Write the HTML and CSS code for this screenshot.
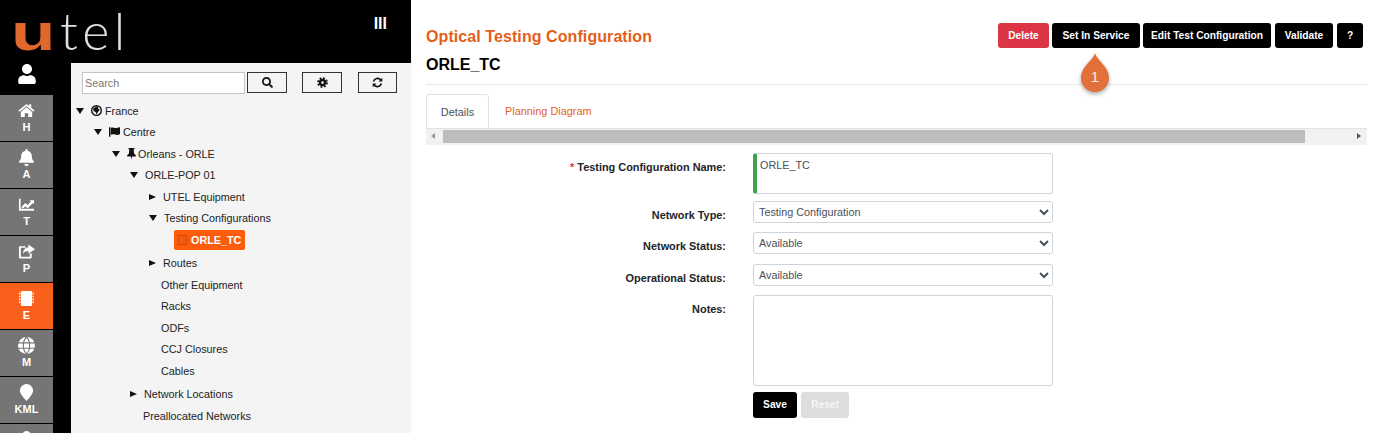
FILE: index.html
```html
<!DOCTYPE html>
<html lang="en">
<head>
<meta charset="utf-8">
<title>Optical Testing Configuration</title>
<link rel="stylesheet" href="styles.css">
</head>
<body>
<div class="app">
  <aside class="left">
    <header class="brand">
      <div class="logo"><span class="logo-u">u</span><span class="logo-tel">tel</span></div>
      <div class="collapse">III</div>
    </header>
    <div class="left-body">
      <nav class="rail">
        <div class="user"><svg class="user-icon" viewBox="0 0 448 512"><path d="M224 256c70.7 0 128-57.3 128-128S294.7 0 224 0 96 57.3 96 128s57.3 128 128 128zm89.6 32h-16.7c-22.2 10.2-46.9 16-72.9 16s-50.6-5.8-72.9-16h-16.7C60.2 288 0 348.2 0 422.4V464c0 26.5 21.5 48 48 48h352c26.5 0 48-21.5 48-48v-41.6c0-74.2-60.2-134.4-134.4-134.4z"/></svg></div>
        <a class="rail-item"><svg class="rail-icon" viewBox="0 0 18 16"><path d="M9 1 0.5 8l1.2 1.4L9 3.4l7.3 6 1.2-1.4L14 5.100V1.500h-2.200v1.800z"/><path d="M9 4.600 3 9.500V15h4.200v-4h3.600v4H15V9.500z"/></svg><span>H</span></a>
        <a class="rail-item"><svg class="rail-icon" viewBox="0 0 448 512"><path d="M224 512c35.32 0 63.97-28.65 63.97-64H160.03c0 35.35 28.65 64 63.97 64zm215.39-149.71c-19.32-20.76-55.47-51.99-55.47-154.29 0-77.7-54.48-139.9-127.94-155.16V32c0-17.67-14.32-32-31.98-32s-31.98 14.33-31.98 32v20.84C118.56 68.1 64.08 130.3 64.08 208c0 102.3-36.15 133.53-55.47 154.29-6 6.45-8.66 14.16-8.61 21.71.11 16.4 12.98 32 32.1 32h383.8c19.12 0 32-15.6 32.1-32 .05-7.55-2.61-15.27-8.61-21.71z"/></svg><span>A</span></a>
        <a class="rail-item"><svg class="rail-icon" viewBox="0 0 18 16"><path d="M1 2h1.800v10.500H17V14.500H1z"/><path d="M4 10.500 7.500 6.500l2.800 2 3.300-3.700-1.500-1.300H17v4.300l-1.300-1.300-5.200 5.500-2.800-2L5.500 12H4z"/></svg><span>T</span></a>
        <a class="rail-item"><svg class="rail-icon" viewBox="0 0 18 16"><path d="M11 0.500 18 5.500 11 10.500V7.500C8 7.500 6 8.500 5.500 11 5 7 7.500 3.800 11 3.500z"/><path d="M1.500 2.500H8V4H3V13.500H12.500V10H14.500V14A1.500 1.500 0 0 1 13 15.500H2.500A1.500 1.500 0 0 1 1 14V3z"/></svg><span>P</span></a>
        <a class="rail-item rail-active"><svg class="rail-icon" viewBox="0 0 16 18"><path d="M3.500 1h9a1.500 1.500 0 0 1 1.500 1.500v13a1.500 1.500 0 0 1-1.500 1.500h-9A1.500 1.500 0 0 1 2 15.500v-13A1.500 1.500 0 0 1 3.500 1z"/><path d="M0 3h1.500v1.500H0zM0 6h1.500v1.500H0zM0 9h1.500v1.500H0zM0 12h1.500v1.500H0zM14.500 3H16v1.500h-1.500zM14.500 6H16v1.500h-1.500zM14.500 9H16v1.500h-1.500zM14.500 12H16v1.500h-1.500z"/></svg><span>E</span></a>
        <a class="rail-item"><svg class="rail-icon" viewBox="0 0 16 16"><circle cx="8" cy="8" r="8"/><path class="rail-cut" d="M0 5.500h16M0 10.500h16M8 0C4 4 4 12 8 16M8 0c4 4 4 12 0 16"/></svg><span>M</span></a>
        <a class="rail-item"><svg class="rail-icon" viewBox="0 0 14 18"><path d="M7 0a7 7 0 0 1 7 7c0 3.500-4 8-7 11C4 15 0 10.500 0 7a7 7 0 0 1 7-7z"/></svg><span>KML</span></a>
        <a class="rail-item"><svg class="rail-icon" viewBox="0 0 448 512"><path d="M224 256c70.7 0 128-57.3 128-128S294.700 0 224 0 96 57.300 96 128s57.300 128 128 128z"/></svg></a>
      </nav>
      <section class="panel">
        <div class="toolbar">
          <input class="search" type="text" placeholder="Search">
          <button class="tool tool-search"><svg class="tool-icon" viewBox="0 0 512 512"><path d="M505 442.7L405.3 343c-4.500-4.500-10.600-7-17-7H372c27.600-35.300 44-79.700 44-128C416 93.100 322.900 0 208 0S0 93.100 0 208s93.100 208 208 208c48.300 0 92.700-16.400 128-44v16.300c0 6.400 2.500 12.500 7 17l99.700 99.700c9.400 9.400 24.600 9.400 33.900 0l28.300-28.300c9.400-9.400 9.400-24.600.1-34zM208 336c-70.700 0-128-57.200-128-128 0-70.700 57.200-128 128-128 70.700 0 128 57.200 128 128 0 70.700-57.200 128-128 128z"/></svg></button>
          <button class="tool tool-gear"><svg class="tool-icon" viewBox="0 0 16 16"><circle class="gear-teeth" cx="8" cy="8" r="6.300"/><circle class="gear-ring" cx="8" cy="8" r="3.700"/></svg></button>
          <button class="tool tool-sync"><svg class="tool-icon" viewBox="0 0 16 16"><path class="sync-arc" d="M2.300 6.500A6 6 0 0 1 12.700 4.200M13.700 9.500A6 6 0 0 1 3.300 11.800"/><path d="M15 1v5.500H9.500zM1 15V9.500h5.500z"/></svg></button>
        </div>
        <ul class="tree">
          <li class="row"><i class="caret-down"></i><svg class="node-icon" viewBox="0 0 16 16"><circle cx="8" cy="8" r="7" class="globe-o"/><path d="M8 2 3 5l1 4 3 1 1 4 2-4 3-3-2-1-1-3z"/></svg><span class="label">France</span></li>
          <li class="lvl1 row"><i class="caret-down"></i><svg class="node-icon flag-icon" viewBox="0 0 16 14"><path d="M0 0h2v14H0z"/><path d="M2.500 1c3-1.500 5.500 1 8.500 0 2-.5 4-1 5-1v10c-2 1.500-5 1.500-7 .7-2-.7-4.500-.7-6.500.3z"/></svg><span class="label">Centre</span></li>
          <li class="lvl2 row"><i class="caret-down"></i><svg class="pin-icon" viewBox="0 0 10 14"><path d="M1.500 0h7v1.500H7.500l.5 5 2 2V10H5.600L5 14 4.400 10H0V8.500l2-2 .5-5h-1z"/></svg><span class="label pin-label">Orleans - ORLE</span></li>
          <li class="lvl3 row"><i class="caret-down"></i><span class="label text-only">ORLE-POP 01</span></li>
          <li class="lvl4 row"><i class="caret-right"></i><span class="label">UTEL Equipment</span></li>
          <li class="lvl4 row"><i class="caret-down"></i><span class="label">Testing Configurations</span></li>
          <li class="lvl-node row"><span class="selected"><i class="square"></i>ORLE_TC</span></li>
          <li class="lvl4 row after-node"><i class="caret-right"></i><span class="label">Routes</span></li>
          <li class="lvl4 row leaf">Other Equipment</li>
          <li class="lvl4 row leaf">Racks</li>
          <li class="lvl4 row leaf">ODFs</li>
          <li class="lvl4 row leaf">CCJ Closures</li>
          <li class="lvl4 row leaf">Cables</li>
          <li class="lvl3 row after-cables"><i class="caret-right"></i><span class="label text-only">Network Locations</span></li>
          <li class="lvl3 row leaf">Preallocated Networks</li>
        </ul>
      </section>
    </div>
  </aside>
  <main class="main">
    <header class="page-head">
      <div class="titles">
        <h1>Optical Testing Configuration</h1>
        <h2>ORLE_TC</h2>
      </div>
      <div class="actions">
        <button class="btn btn-red">Delete</button>
        <button class="btn btn-set">Set In Service</button>
        <button class="btn btn-edit">Edit Test Configuration</button>
        <button class="btn btn-validate">Validate</button>
        <button class="btn btn-help">?</button>
      </div>
      <div class="marker">
        <svg class="marker-drop" viewBox="0 0 30 44"><path d="M15 0C17 8 29 13 29 25A14 14 0 0 1 1 25C1 13 13 8 15 0Z"/></svg>
        <span class="marker-num">1</span>
      </div>
    </header>
    <div class="tabs">
      <a class="tab tab-active">Details</a>
      <a class="tab tab-link">Planning Diagram</a>
    </div>
    <div class="hscroll">
      <i class="arrow-left"></i>
      <div class="track"><div class="thumb"></div></div>
      <i class="arrow-right"></i>
    </div>
    <form class="form">
      <label class="field-label label-name"><span class="req">*</span> Testing Configuration Name:</label>
      <div class="name-box">ORLE_TC</div>
      <label class="field-label label-sel">Network Type:</label>
      <select class="select"><option>Testing Configuration</option></select>
      <label class="field-label label-sel">Network Status:</label>
      <select class="select"><option>Available</option></select>
      <label class="field-label label-sel">Operational Status:</label>
      <select class="select"><option>Available</option></select>
      <label class="field-label label-notes">Notes:</label>
      <textarea class="notes"></textarea>
      <div class="form-actions">
        <button type="button" class="btn btn-save">Save</button>
        <button type="button" class="btn btn-reset">Reset</button>
      </div>
    </form>
  </main>
</div>
</body>
</html>
```

FILE: styles.css
```css
* { box-sizing: border-box; }
html, body { margin: 0; height: 433px; overflow: hidden; background: #fff; }
body { font-family: "Liberation Sans", Arial, sans-serif; font-size: 11px; color: #212529; }
ul { list-style: none; margin: 0; padding: 0; }

.app { display: flex; height: 433px; overflow: hidden; }

/* left column */
.left { width: 411px; flex: none; background: #000; display: flex; flex-direction: column; height: 433px; overflow: hidden; }
.brand { height: 63px; flex: none; display: flex; justify-content: space-between; padding: 0 24px 0 11px; }
.logo { height: 63px; white-space: nowrap; display: flex; align-items: baseline; }
.logo-u { font-family: "Liberation Sans", sans-serif; font-weight: 700; font-size: 52px; line-height: 60px; color: #e0682c; display: inline-block; width: 49px; transform: scaleX(1.4); transform-origin: 0 100%; }
.logo-tel { font-family: "Lato", sans-serif; font-weight: 300; font-size: 52px; line-height: 60px; color: #e0e0e0; letter-spacing: 4.500px; }
.collapse { color: #fff; font-size: 16px; font-weight: 700; padding-top: 15px; }

.left-body { flex: 1; display: flex; min-height: 0; }
.rail { width: 53px; flex: none; margin-right: 18px; display: flex; flex-direction: column; }
.user { height: 32px; flex: none; display: flex; justify-content: center; padding-top: 1px; }
.user-icon { width: 18px; height: 20px; fill: #fff; }
.rail-item { height: 46px; flex: none; margin-bottom: 1px; background: #757575; color: #fff; font-weight: 700; font-size: 11px; display: flex; flex-direction: column; align-items: center; padding-top: 7px; gap: 2px; }
.rail-item span { line-height: 13px; }
.rail-active { background: #f9601c; }
.rail-icon { width: 17px; height: 17px; fill: #fff; }
.rail-cut { fill: none; stroke: #757575; stroke-width: 1; }

.panel { width: 340px; flex: none; background: #f4f4f4; padding: 9px 11px 0; overflow: hidden; }
.toolbar { display: flex; align-items: flex-start; height: 22px; }
.search { width: 163px; height: 22px; border: 1px solid #c4c4c4; background: #fff; padding: 0 2px; font: 10.800px "Liberation Sans", sans-serif; color: #333; }
.search::placeholder { color: #777; opacity: 1; }
.tool { height: 21px; border: 1px solid #333; background: #f4f4f4; padding: 0; display: flex; align-items: center; justify-content: center; }
.tool-search { width: 40px; margin-left: 2px; }
.tool-gear { width: 40px; margin-left: 15px; }
.tool-sync { width: 39px; margin-left: 16px; }
.tool-icon { width: 11px; height: 11px; fill: #111; }
.gear-teeth { fill: none; stroke: #111; stroke-width: 3; stroke-dasharray: 2.6 2.350; }
.gear-ring { fill: none; stroke: #111; stroke-width: 3.400; }
.sync-arc { fill: none; stroke: #111; stroke-width: 2.400; }

.tree { margin: 3px 0 0 -6px; padding-top: 3px; color: #222; font-size: 10.800px; }
.row { height: 21.5px; display: flex; align-items: center; white-space: nowrap; }
.lvl1 { padding-left: 18px; }
.lvl2 { padding-left: 36px; }
.lvl3 { padding-left: 54px; }
.lvl4 { padding-left: 73px; }
.lvl-node { padding-left: 98px; }
.leaf { padding-left: 85px; }
.lvl3.leaf { padding-left: 67px; }
.after-node { margin-top: 2.200px; }
.after-cables { margin-top: 2px; }
.caret-down { width: 0; height: 0; flex: none; border-left: 4px solid transparent; border-right: 4px solid transparent; border-top: 6px solid #111; margin-right: 7px; }
.caret-right { width: 0; height: 0; flex: none; border-top: 3.500px solid transparent; border-bottom: 3.500px solid transparent; border-left: 7px solid #111; margin-right: 7px; }
.node-icon { width: 11px; height: 11px; flex: none; fill: #111; margin-right: 3px; }
.flag-icon { width: 11px; height: 10px; }
.globe-o { fill: #f4f4f4; stroke: #111; stroke-width: 2; }
.pin-icon { width: 9px; height: 12px; flex: none; fill: #111; margin-right: 2px; }
.selected { display: inline-flex; align-items: center; height: 20px; padding: 0 4px; background: #fb5d0d; color: #fff; font-weight: 700; font-size: 10.800px; border-radius: 2px; }
.square { width: 9px; height: 10px; border: 1px solid #d9480a; background: #f55a14; margin-right: 4px; }

/* main */
.main { flex: 1; min-width: 0; padding: 0 6px 0 15px; background: #fff; }
.page-head { position: relative; height: 85px; border-bottom: 1px solid #e7e7e7; display: flex; justify-content: space-between; padding-right: 4px; }
.titles { padding-top: 28px; }
h1 { margin: 0; font-size: 16px; line-height: 18px; font-weight: 700; color: #e35f1a; letter-spacing: .08px; }
h2 { margin: 10px 0 0; font-size: 16px; line-height: 18px; font-weight: 700; color: #000; }
.actions { display: flex; gap: 3px; padding-top: 23px; }
.btn { height: 25px; border: 0; border-radius: 3px; background: #000; color: #fff; font: 700 10.200px "Liberation Sans", sans-serif; padding: 0; }
.btn-red { background: #dc3545; width: 51px; }
.btn-set { width: 88px; }
.btn-edit { width: 128px; }
.btn-validate { width: 58px; margin-left: 1px; }
.btn-help { width: 26px; margin-left: 1px; }
.marker { position: absolute; left: 654px; top: 53px; width: 30px; height: 44px; }
.marker-drop { display: block; width: 30px; height: 44px; fill: #e2703a; filter: drop-shadow(0 2px 2px rgba(0, 0, 0, .35)); }
.marker-num { position: absolute; left: 0; top: 15px; width: 30px; text-align: center; color: #f6eee9; font-size: 15px; line-height: 17px; }

.tabs { display: flex; margin-top: 9px; height: 34px; }
.tab { font-size: 10.900px; display: flex; align-items: center; height: 34px; }
.tab-active { width: 63px; justify-content: center; border: 1px solid #e3e3e3; border-bottom: 0; border-radius: 3px 3px 0 0; color: #495057; background: #fff; }
.tab-link { color: #e35f1a; margin-left: 16px; }

.hscroll { height: 17px; display: flex; align-items: center; background: #f1f1f1; border-top: 1px solid #e3e3e3; padding-bottom: 2px; }
.track { flex: 1; height: 13px; margin: 0 10px 0 8px; }
.thumb { width: 862px; height: 13px; background: #bdbdbd; }
.arrow-left { width: 0; height: 0; margin-left: 5px; border-top: 3px solid transparent; border-bottom: 3px solid transparent; border-right: 4px solid #999; flex: none; }
.arrow-right { width: 0; height: 0; margin-right: 6px; border-top: 3px solid transparent; border-bottom: 3px solid transparent; border-left: 4px solid #555; flex: none; }

.form { display: grid; grid-template-columns: 300px 300px; column-gap: 27px; margin-top: 8px; align-items: start; }
.field-label { text-align: right; font-weight: 700; font-size: 10.900px; color: #212529; line-height: 13px; }
.label-name { padding-top: 8px; }
.label-sel { padding-top: 8px; }
.label-notes { padding-top: 8px; }
.req { color: #dc3545; }
.name-box { height: 41px; margin-bottom: 7px; border: 1px solid #ced4da; border-left: 4px solid #3fa34d; border-radius: 3px; padding: 5px 3px; color: #495057; line-height: 13px; font-size: 10.800px; }
.select { width: 300px; height: 22px; margin-bottom: 9.400px; border: 1px solid #ced4da; border-radius: 3px; background: #fff; color: #495057; font: 10.800px "Liberation Sans", sans-serif; padding: 0 1px; }
.notes { grid-column: 2; width: 300px; height: 91px; border: 1px solid #ced4da; border-radius: 3px; background: #fff; resize: none; display: block; }
.form-actions { grid-column: 2; display: flex; gap: 4px; margin-top: 5.800px; }
.btn-save { width: 44px; height: 26px; }
.btn-reset { width: 48px; height: 26px; background: #dcdddf; color: #f6f6f6; }
```
